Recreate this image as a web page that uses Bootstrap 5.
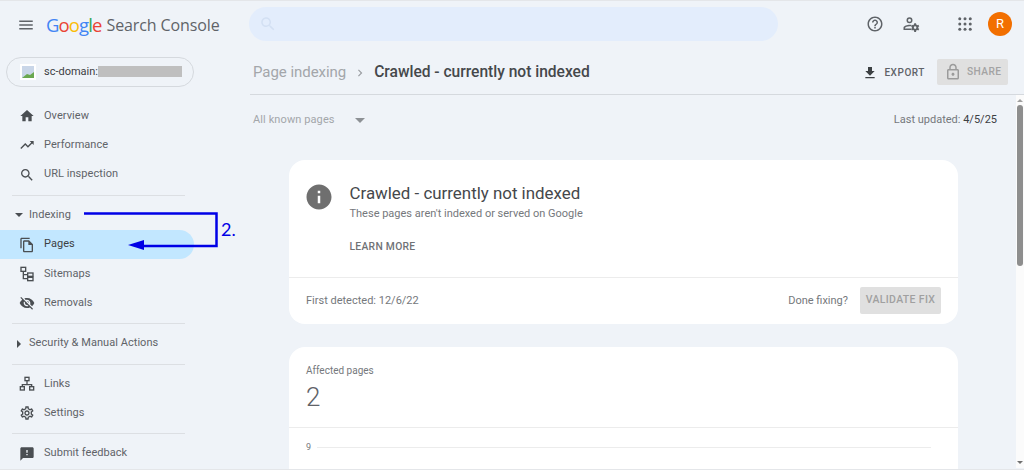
<!DOCTYPE html>
<html lang="en">
<head>
  <meta charset="UTF-8">
  <title>Search Console</title>
  <link href="https://cdn.jsdelivr.net/npm/bootstrap@5.3.2/dist/css/bootstrap.min.css" rel="stylesheet">
  <style>
    html, body { height: 470px; overflow: hidden; }
    body { background: #eff3f8; font-family: Roboto, "Liberation Sans", sans-serif; color: #3c4043; font-size: 11px; border-top: 1px solid #e4e6e9; border-bottom: 1px solid #e4e6e9; }
    svg { fill: currentColor; flex-shrink: 0; display: block; }
    .top-bar { height: 48px; }
    .top-left { width: 249px; padding-left: 17px; }
    .logo-word { font-family: "Open Sans", "Liberation Sans", sans-serif; font-size: 18.5px; letter-spacing: -.9px; margin-left: 11px; }
    .logo-rest { font-family: "Open Sans", "Liberation Sans", sans-serif; font-size: 16px; color: #5f6368; margin-left: 5px; letter-spacing: -.1px; }
    .g-blue { color: #4285f4; } .g-red { color: #ea4335; } .g-yellow { color: #fbbc05; } .g-green { color: #34a853; }
    .search-box { width: 529px; height: 34px; background: #e3edfc; border-radius: 17px; color: #d3e0f3; padding-left: 10px; margin-bottom: 3px; }
    .top-icons { color: #5f6368; margin-left: 88px; margin-bottom: 2px; }
    .gap-user { margin-left: 18px; }
    .gap-apps { margin-left: 36px; }
    .avatar-r { width: 24px; height: 24px; background: #f26f00; color: #fff; font-size: 13px; margin-left: 14px; }
    .side-col { width: 250px; flex-shrink: 0; }
    .prop-pill { width: 188px; height: 30px; margin: 8px 0 14.5px 6px; border: 1px solid #d5d9de; border-radius: 15px; padding-left: 13px; color: #3c4043; font-size: 11px; }
    .prop-favicon { width: 16px; height: 16px; background: #fff; margin-right: 8px; padding: 2px; }
    .prop-blur { width: 84px; height: 11px; background: #bfbfbf; margin-top: -1px; }
    .side-list { width: 194px; }
    .side-item { height: 29.3px; padding-left: 19px; color: #5f6368; font-size: 11px; letter-spacing: .05px; }
    .side-item svg { margin-right: 9px; color: #4a4e52; }
    .side-item.picked { background: #c2e7ff; border-radius: 0 15px 15px 0; color: #3c4043; }
    .side-head { height: 29.5px; padding-left: 15px; color: #5f6368; font-size: 11px; letter-spacing: .05px; }
    .side-head svg { margin-right: 6px; color: #4a4e52; }
    .side-rule { margin: 5.5px 0 4.5px 12px; width: 173px; height: 1px; background: #dcdfe3; }
    .line-icon { fill: none; stroke: currentColor; stroke-width: 2; }
    .crumb-bar { height: 46px; border-bottom: 1px solid #d5d9de; padding: 2px 16px 0 3px; }
    .crumb-old { font-size: 15px; color: #a3a6aa; letter-spacing: -.05px; }
    .crumb-now { font-size: 15.6px; font-weight: 500; color: #45484b; letter-spacing: -.02px; }
    .crumb-sep { color: #9a9da1; margin: 0 7px 0 7px; }
    .export-btn { color: #5f6368; font-size: 10px; font-weight: 500; letter-spacing: .55px; margin-right: 12px; }
    .export-btn svg { margin-right: 6px; color: #3c4043; }
    .share-btn { width: 71px; height: 26px; background: #e0e0e0; color: #a3a3a3; font-size: 10.2px; font-weight: 500; letter-spacing: .4px; border-radius: 2px; padding-left: 7px; margin-top: -2px; }
    .share-btn svg { margin-right: 5px; color: #9b9b9b; }
    .page-body { min-width: 0; }
    .filter-row { height: 49px; padding: 1px 19px 0 3px; }
    .filter-name { color: #a3a6aa; font-size: 11px; letter-spacing: .1px; }
    .filter-arrow { width: 0; height: 0; border-left: 5px solid transparent; border-right: 5px solid transparent; border-top: 5px solid #8d9195; margin-left: 20px; }
    .updated-text { color: #75787c; font-size: 11px; }
    .updated-text b { font-weight: 400; color: #3c4043; }
    .gsc-panel { margin: 16px 58px 23px 39px; background: #fff; border-radius: 16px; }
    .panel-top { height: 117px; padding: 23px 17px 0; }
    .info-icon { color: #6f6f6f; margin: -1px 16px 0 -2.5px; }
    .panel-title { font-size: 16.9px; color: #45484b; line-height: 21px; }
    .panel-sub { font-size: 11px; color: #75787c; line-height: 14px; margin-top: 3px; }
    .learn-link { font-size: 10.3px; font-weight: 500; color: #6f7276; letter-spacing: .3px; margin-top: 18px; }
    .panel-foot { height: 47px; border-top: 1px solid #ececec; padding: 0 17px; color: #75787c; font-size: 11px; }
    .fix-btn { width: 81px; height: 27px; background: #e0e0e0; color: #a0a0a0; font-size: 10.5px; font-weight: 500; letter-spacing: .35px; border-radius: 2px; margin: -2px 0 0 12px; }
    .stat-panel { margin: 0 58px 0 39px; background: #fff; border-radius: 16px 16px 0 0; height: 130px; }
    .stat-top { height: 81px; padding: 17px 17px 0; border-bottom: 1px solid #ececec; }
    .stat-label { color: #75787c; font-size: 10px; line-height: 13px; }
    .stat-num { font-size: 26px; color: #5f6368; line-height: 30px; margin-top: 5px; font-weight: 300; }
    .chart-row { padding: 13px 27px 0 17px; color: #75787c; font-size: 9px; line-height: 12px; }
    .chart-rule { height: 1px; background: #ececec; margin-left: 6px; }
    .scroll-rail { width: 8px; flex-shrink: 0; background: #fbfbfb; height: 373px; }
    .rail-up { width: 0; height: 0; border-left: 3px solid transparent; border-right: 3px solid transparent; border-bottom: 3px solid #a0a0a0; margin: 4px auto 0; }
    .rail-thumb { width: 6px; height: 161px; background: #8e8e8e; margin: 3px auto 0; border-radius: 3px; }
    .rail-down { width: 0; height: 0; border-left: 3px solid transparent; border-right: 3px solid transparent; border-top: 3px solid #707070; margin: 0 auto 4px; }
    .note-layer { position: absolute; left: 0; top: 0; pointer-events: none; }
    .note-text { font-family: Lato, "Liberation Sans", sans-serif; font-size: 18px; fill: #0000e6; }
  </style>
</head>
<body class="position-relative">

  <!-- Top bar -->
  <header class="top-bar d-flex align-items-center">
    <div class="top-left d-flex align-items-center">
      <svg width="18" height="18" viewBox="0 0 24 24" style="color:#5f6368"><path d="M3 18h18v-2H3v2zm0-5h18v-2H3v2zm0-7v2h18V6H3z"/></svg>
      <span class="logo-word"><span class="g-blue">G</span><span class="g-red">o</span><span class="g-yellow">o</span><span class="g-blue">g</span><span class="g-green">l</span><span class="g-red">e</span></span>
      <span class="logo-rest">Search Console</span>
    </div>
    <div class="search-box d-flex align-items-center">
      <svg width="18" height="18" viewBox="0 0 24 24"><path d="M15.5 14h-.79l-.28-.27C15.41 12.59 16 11.11 16 9.5 16 5.91 13.09 3 9.5 3S3 5.91 3 9.5 5.91 16 9.5 16c1.61 0 3.09-.59 4.23-1.57l.27.28v.79l5 4.99L20.49 19l-4.99-5zm-6 0C7.01 14 5 11.99 5 9.5S7.01 5 9.5 5 14 7.01 14 9.5 11.99 14 9.5 14z"/></svg>
    </div>
    <div class="top-icons d-flex align-items-center">
      <svg width="18" height="18" viewBox="0 0 24 24"><path d="M11 18h2v-2h-2v2zm1-16C6.48 2 2 6.48 2 12s4.48 10 10 10 10-4.48 10-10S17.52 2 12 2zm0 18c-4.41 0-8-3.59-8-8s3.59-8 8-8 8 3.59 8 8-3.59 8-8 8zm0-14c-2.21 0-4 1.79-4 4h2c0-1.1.9-2 2-2s2 .9 2 2c0 2-3 1.75-3 5h2c0-2.25 3-2.5 3-5 0-2.21-1.79-4-4-4z"/></svg>
      <svg class="gap-user" width="18" height="18" viewBox="0 0 24 24"><path d="M10 3a4 4 0 1 0 0 8 4 4 0 0 0 0-8zm0 2a2 2 0 1 1 0 4 2 2 0 0 1 0-4zM10 13c-2.700 0-8 1.300-8 4v3h10v-2H4v-1c0-.6 3-2.100 6-2.100.6 0 1.200.1 1.800.2l.8-1.800c-.9-.2-1.800-.3-2.600-.3z"/><path d="M21.700 16.800c0-.3.100-.5.100-.8l1.200-1-1.200-2-1.500.5c-.4-.3-.8-.5-1.300-.7L18.700 11h-2.400l-.3 1.800c-.5.200-.9.400-1.300.7l-1.500-.5-1.200 2 1.200 1c0 .3-.1.500-.1.800s0 .5.100.8l-1.200 1 1.200 2 1.500-.5c.4.300.8.500 1.300.7l.3 1.700h2.400l.3-1.700c.5-.2.900-.4 1.300-.7l1.500.5 1.200-2-1.200-1c0-.3-.1-.5-.1-.8zm-4.200 1.700a1.700 1.700 0 1 1 0-3.400 1.700 1.700 0 0 1 0 3.400z"/></svg>
      <svg class="gap-apps" width="18" height="18" viewBox="0 0 24 24">
        <circle cx="5" cy="5" r="2"/><circle cx="12" cy="5" r="2"/><circle cx="19" cy="5" r="2"/>
        <circle cx="5" cy="12" r="2"/><circle cx="12" cy="12" r="2"/><circle cx="19" cy="12" r="2"/>
        <circle cx="5" cy="19" r="2"/><circle cx="12" cy="19" r="2"/><circle cx="19" cy="19" r="2"/>
      </svg>
      <div class="avatar-r rounded-circle d-flex align-items-center justify-content-center">R</div>
    </div>
  </header>

  <div class="d-flex">
    <!-- Sidebar -->
    <aside class="side-col">
      <div class="prop-pill d-flex align-items-center">
        <div class="prop-favicon"><svg width="12" height="12" viewBox="0 0 12 12"><rect width="12" height="12" fill="#c9d6e8"/><path d="M0 12l5-4 3 1 4-3v6z" fill="#6aa84f"/></svg></div>
        <span>sc-domain:</span><span class="prop-blur"></span>
      </div>
      <nav class="side-list">
        <div class="side-item d-flex align-items-center"><svg width="16" height="16" viewBox="0 0 24 24"><path d="M10 20v-6h4v6h5v-8h3L12 3 2 12h3v8z"/></svg>Overview</div>
        <div class="side-item d-flex align-items-center"><svg width="16" height="16" viewBox="0 0 24 24"><path d="M16 6l2.290 2.290-4.880 4.880-4-4L2 16.590 3.410 18l6-6 4 4 6.300-6.290L22 12V6z"/></svg>Performance</div>
        <div class="side-item d-flex align-items-center"><svg width="16" height="16" viewBox="0 0 24 24"><path d="M15.500 14h-.79l-.28-.27C15.410 12.590 16 11.110 16 9.500 16 5.910 13.090 3 9.500 3S3 5.910 3 9.500 5.910 16 9.500 16c1.610 0 3.090-.59 4.230-1.570l.27.28v.79l5 4.990L20.490 19l-4.990-5zm-6 0C7.010 14 5 11.990 5 9.500S7.010 5 9.500 5 14 7.010 14 9.500 11.990 14 9.500 14z"/></svg>URL inspection</div>
        <div class="side-rule"></div>
        <div class="side-head d-flex align-items-center"><svg width="8" height="8" viewBox="0 0 8 8"><path d="M0 2h8L4 6z"/></svg>Indexing</div>
        <div class="side-item picked d-flex align-items-center"><svg width="16" height="16" viewBox="0 0 24 24"><path d="M16 1H4c-1.100 0-2 .9-2 2v14h2V3h12V1zm-1 4H8c-1.100 0-1.990.9-1.990 2L6 21c0 1.100.89 2 1.990 2H19c1.100 0 2-.9 2-2V11l-6-6zM8 21V7h6v5h5v9H8z"/></svg>Pages</div>
        <div class="side-item d-flex align-items-center"><svg class="line-icon" width="16" height="16" viewBox="0 0 24 24"><rect x="3" y="2" width="7" height="6"/><path d="M6.500 8v11H13M6.500 13H13"/><rect x="13" y="10.500" width="8" height="5"/><rect x="13" y="17" width="8" height="5"/></svg>Sitemaps</div>
        <div class="side-item d-flex align-items-center"><svg width="16" height="16" viewBox="0 0 24 24"><path d="M12 7c2.760 0 5 2.240 5 5 0 .65-.13 1.260-.36 1.830l2.920 2.920c1.510-1.260 2.700-2.890 3.430-4.750-1.730-4.390-6-7.500-11-7.500-1.400 0-2.740.25-3.980.7l2.160 2.160C10.740 7.130 11.350 7 12 7zM2 4.270l2.280 2.280.46.46C3.080 8.300 1.780 10.020 1 12c1.730 4.390 6 7.500 11 7.500 1.550 0 3.030-.3 4.380-.84l.42.42L19.730 22 21 20.730 3.270 3 2 4.270zM7.530 9.800l1.550 1.550c-.05.21-.08.43-.08.65 0 1.660 1.340 3 3 3 .22 0 .44-.03.65-.08l1.550 1.550c-.67.33-1.410.53-2.200.53-2.760 0-5-2.240-5-5 0-.79.2-1.530.53-2.200zm4.310-.78l3.150 3.150.02-.16c0-1.660-1.340-3-3-3l-.17.01z"/></svg>Removals</div>
        <div class="side-rule"></div>
        <div class="side-head d-flex align-items-center"><svg width="8" height="8" viewBox="0 0 8 8"><path d="M2 0v8l4-4z"/></svg>Security &amp; Manual Actions</div>
        <div class="side-rule"></div>
        <div class="side-item d-flex align-items-center"><svg class="line-icon" width="16" height="16" viewBox="0 0 24 24"><rect x="9" y="2" width="6" height="5"/><path d="M12 7v6M5 16v-3h14v3"/><rect x="2" y="16" width="6" height="5"/><rect x="16" y="16" width="6" height="5"/></svg>Links</div>
        <div class="side-item d-flex align-items-center"><svg width="16" height="16" viewBox="0 0 24 24"><path d="M19.430 12.980c.04-.32.07-.64.07-.98 0-.34-.03-.66-.07-.98l2.110-1.650c.19-.15.24-.42.12-.64l-2-3.460c-.09-.16-.26-.25-.44-.25-.06 0-.12.01-.17.03l-2.490 1c-.52-.4-1.080-.73-1.690-.98l-.38-2.650C14.460 2.180 14.250 2 14 2h-4c-.25 0-.46.18-.49.42l-.38 2.650c-.61.25-1.170.59-1.690.98l-2.490-1c-.06-.02-.12-.03-.18-.03-.17 0-.34.09-.43.25l-2 3.460c-.13.22-.07.49.12.64l2.110 1.650c-.04.32-.07.65-.07.98 0 .33.03.66.07.98l-2.110 1.650c-.19.15-.24.42-.12.64l2 3.460c.09.16.26.25.44.25.06 0 .12-.01.17-.03l2.490-1c.52.4 1.080.73 1.690.98l.38 2.650c.03.24.24.42.49.42h4c.25 0 .46-.18.49-.42l.38-2.650c.61-.25 1.170-.59 1.690-.98l2.490 1c.06.02.12.03.18.03.17 0 .34-.09.43-.25l2-3.460c.12-.22.07-.49-.12-.64l-2.110-1.650zm-1.980-1.710c.04.31.05.52.05.73 0 .21-.02.43-.05.73l-.14 1.130.89.7 1.080.84-.7 1.210-1.270-.51-1.040-.42-.9.68c-.43.32-.84.56-1.250.73l-1.060.43-.16 1.130-.2 1.350h-1.400l-.19-1.350-.16-1.130-1.060-.43c-.43-.18-.83-.41-1.230-.71l-.91-.7-1.060.43-1.270.51-.7-1.210 1.080-.84.89-.7-.14-1.130c-.03-.31-.05-.54-.05-.74s.02-.43.05-.73l.14-1.130-.89-.7-1.080-.84.7-1.210 1.270.51 1.040.42.9-.68c.43-.32.84-.56 1.250-.73l1.060-.43.16-1.130.2-1.350h1.390l.19 1.350.16 1.130 1.060.43c.43.18.83.41 1.230.71l.91.7 1.060-.43 1.270-.51.7 1.210-1.070.85-.89.7.14 1.130zM12 8c-2.210 0-4 1.790-4 4s1.790 4 4 4 4-1.790 4-4-1.790-4-4-4zm0 6c-1.100 0-2-.9-2-2s.9-2 2-2 2 .9 2 2-.9 2-2 2z"/></svg>Settings</div>
        <div class="side-rule"></div>
        <div class="side-item d-flex align-items-center"><svg width="16" height="16" viewBox="0 0 24 24"><path d="M20 2H4c-1.100 0-1.990.9-1.990 2L2 22l4-4h14c1.100 0 2-.9 2-2V4c0-1.100-.9-2-2-2zm-7 12h-2v-2h2v2zm0-4h-2V6h2v4z"/></svg>Submit feedback</div>
      </nav>
    </aside>

    <!-- Main column -->
    <main class="flex-grow-1 page-body">
      <div class="crumb-bar d-flex align-items-center">
        <span class="crumb-old">Page indexing</span>
        <svg class="crumb-sep" width="14" height="14" viewBox="0 0 24 24"><path d="M8.590 16.590L13.170 12 8.590 7.410 10 6l6 6-6 6z"/></svg>
        <span class="crumb-now">Crawled - currently not indexed</span>
        <div class="ms-auto d-flex align-items-center">
          <div class="export-btn d-flex align-items-center"><svg width="16" height="16" viewBox="0 0 24 24"><path d="M19 9h-4V3H9v6H5l7 7 7-7zM5 18v2h14v-2H5z"/></svg>EXPORT</div>
          <div class="share-btn d-flex align-items-center"><svg width="18" height="18" viewBox="0 0 24 24"><path d="M18 8h-1V6c0-2.760-2.240-5-5-5S7 3.240 7 6v2H6c-1.100 0-2 .9-2 2v10c0 1.100.9 2 2 2h12c1.100 0 2-.9 2-2V10c0-1.100-.9-2-2-2zM9 6c0-1.660 1.340-3 3-3s3 1.340 3 3v2H9V6zm9 14H6V10h12v10zm-6-3c1.100 0 2-.9 2-2s-.9-2-2-2-2 .9-2 2 .9 2 2 2z"/></svg>SHARE</div>
        </div>
      </div>
      <div class="d-flex">
        <div class="flex-grow-1 page-body">
          <div class="filter-row d-flex align-items-center">
            <span class="filter-name">All known pages</span>
            <span class="filter-arrow"></span>
            <span class="updated-text ms-auto">Last updated: <b>4/5/25</b></span>
          </div>
          <section class="gsc-panel">
            <div class="panel-top d-flex align-items-start">
              <svg class="info-icon" width="30" height="30" viewBox="0 0 24 24"><path d="M12 2C6.480 2 2 6.480 2 12s4.480 10 10 10 10-4.480 10-10S17.520 2 12 2zm1 15h-2v-6h2v6zm0-8h-2V7h2v2z"/></svg>
              <div>
                <div class="panel-title">Crawled - currently not indexed</div>
                <div class="panel-sub">These pages aren't indexed or served on Google</div>
                <div class="learn-link">LEARN MORE</div>
              </div>
            </div>
            <div class="panel-foot d-flex align-items-center">
              <span>First detected: 12/6/22</span>
              <span class="ms-auto">Done fixing?</span>
              <div class="fix-btn d-flex align-items-center justify-content-center">VALIDATE FIX</div>
            </div>
          </section>
          <section class="stat-panel">
            <div class="stat-top">
              <div class="stat-label">Affected pages</div>
              <div class="stat-num">2</div>
            </div>
            <div class="chart-row d-flex align-items-center"><span>9</span><div class="chart-rule flex-grow-1"></div></div>
          </section>
        </div>
        <div class="scroll-rail d-flex flex-column">
          <div class="rail-up"></div>
          <div class="rail-thumb"></div>
          <div class="rail-down mt-auto"></div>
        </div>
      </div>
    </main>
  </div>

  <!-- Hand-drawn note over the sidebar -->
  <svg class="note-layer" width="250" height="270" viewBox="0 0 250 270">
    <path d="M84 212.500H216.500V245H140" fill="none" stroke="#0000e6" stroke-width="2.500"/>
    <path d="M128 244l16-5v10z" fill="#0000e6"/>
    <text class="note-text" x="221" y="235">2.</text>
  </svg>

</body>
</html>
